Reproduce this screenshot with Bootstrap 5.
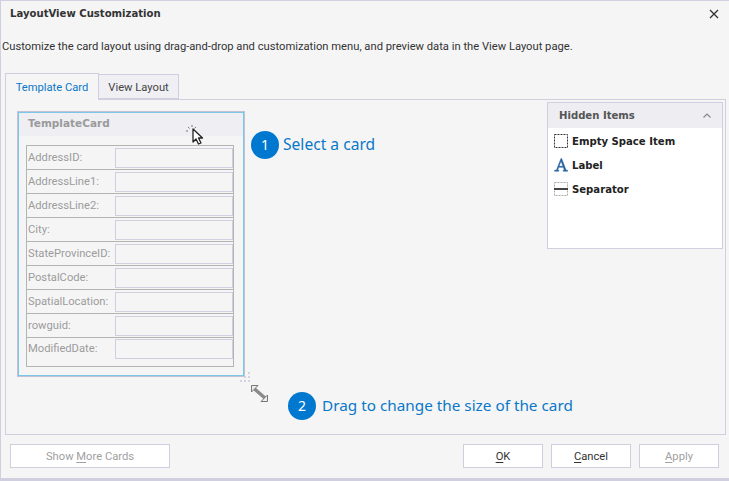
<!DOCTYPE html>
<html lang="en">
<head>
<meta charset="utf-8">
<title>LayoutView Customization</title>
<link href="https://cdn.jsdelivr.net/npm/bootstrap@5.3.0/dist/css/bootstrap.min.css" rel="stylesheet">
<style>
html,body{height:100%;overflow:hidden}
body{background:#f5f5f6;font-family:Roboto,"Noto Sans",sans-serif;font-size:11.2px;color:#333;line-height:1}
.lv-win{height:481px;border:solid #cfcfe0;border-width:1px 0 3px 1px;position:relative}
.lv-title{height:24px;padding:7px 8px 0 9px;font:bold 10.1px "DejaVu Sans",sans-serif;color:#333}
.lv-close{position:absolute;right:10px;top:8px;width:10px;height:10px}
.lv-desc{height:47px;padding:16px 0 0 1px;white-space:nowrap}
.lv-tabs{margin-left:4px;height:27px;border:0;align-items:flex-end}
.lv-tab{height:25px;padding-top:7px;border:1px solid #cfcfe0;background:#f0f0f4;color:#444;text-align:center;margin-left:-1px}
.lv-tab-on{height:27px;width:94px;padding-top:8px;background:#f5f5f6;color:#0a78c8;border-bottom:0;margin-left:0;position:relative;z-index:1;margin-bottom:-1px}
.lv-tab-off{width:81px}
.lv-panel{margin:0 3px 0 4px;height:336px;border:1px solid #cfcfe0;position:relative}
.lv-top{height:292px}
.lv-card{margin:11px 0 0 11px;width:228px;height:266px;border:2px solid #7cc6ea;outline:1px solid #c2c2d2;outline-offset:-1px;flex:none}
.lv-cardhead{height:23px;background:#eeeef3;padding:4px 0 0 9px;font:bold 10.5px "DejaVu Sans",sans-serif;color:#9a9a9a}
.lv-group{margin:9px 9px 0 7px;border:1px solid #b4b4b4;height:222px}
.lv-row{height:24px;border-bottom:1px solid #b4b4b4;padding:1px 0 0 1px;color:#9c9c9c}
.lv-row:last-child{border-bottom:0;height:28px;align-items:flex-start!important}
.lv-row:last-child .lv-lbl{margin-top:4px}
.lv-lbl{width:87px;flex:none;white-space:nowrap}
.lv-input{width:118px;height:20px;border:1px solid #cfcfe0}
.lv-step{color:#0a78c8;font-size:15.3px;white-space:nowrap;font-family:"Noto Sans",sans-serif}
.lv-step1 span{font-size:15.6px}
.lv-num{width:28px;height:28px;background:#0078cf;color:#fff;font-size:14px;border-radius:50%;flex:none}
.lv-step1{margin:31px 0 0 6px}
.lv-step2{margin:0 0 0 282px;height:28px;gap:6px}
.lv-hidden{margin:2px 2px 0 auto;width:176px;height:147px;border:1px solid #cfcfe0;background:#fff;flex:none}
.lv-hhead{height:25px;background:#ededf2;padding:0 11px;font:bold 10.1px "DejaVu Sans",sans-serif;color:#555}
.lv-item{height:24px;padding-left:6px;font:bold 10.1px "DejaVu Sans",sans-serif;color:#222;gap:4px}
.lv-items{padding-top:1px}
.lv-ic{width:14px;height:14px;flex:none}
.lv-foot{padding:9px 10px 0 9px}
.lv-btn{height:24px;width:80px;padding:1px 0 0;border:1px solid #cfcfe0;border-radius:0;background:#fff;color:#333;font-size:11.2px;line-height:1}
.lv-btn:disabled{background:#fff;color:#a0a0a0;border-color:#cfcfe0;opacity:1}
.lv-wide{width:160px}
.lv-cur{position:absolute;pointer-events:none}
u{text-underline-offset:2px}
</style>
</head>
<body>
<div class="lv-win">
  <div class="lv-title">LayoutView Customization</div>
  <svg class="lv-close" viewBox="0 0 10 10"><path d="M1 1 9 9M9 1 1 9" stroke="#333" stroke-width="1.3" fill="none"/></svg>
  <div class="lv-desc">Customize the card layout using drag-and-drop and customization menu, and preview data in the View Layout page.</div>
  <div class="d-flex lv-tabs">
    <div class="lv-tab lv-tab-on">Template Card</div>
    <div class="lv-tab lv-tab-off">View Layout</div>
  </div>
  <div class="lv-panel">
    <div class="d-flex align-items-start lv-top">
      <div class="lv-card">
        <div class="lv-cardhead">TemplateCard</div>
        <div class="lv-group">
          <div class="lv-row d-flex align-items-center"><div class="lv-lbl">AddressID:</div><div class="lv-input"></div></div>
          <div class="lv-row d-flex align-items-center"><div class="lv-lbl">AddressLine1:</div><div class="lv-input"></div></div>
          <div class="lv-row d-flex align-items-center"><div class="lv-lbl">AddressLine2:</div><div class="lv-input"></div></div>
          <div class="lv-row d-flex align-items-center"><div class="lv-lbl">City:</div><div class="lv-input"></div></div>
          <div class="lv-row d-flex align-items-center"><div class="lv-lbl">StateProvinceID:</div><div class="lv-input"></div></div>
          <div class="lv-row d-flex align-items-center"><div class="lv-lbl">PostalCode:</div><div class="lv-input"></div></div>
          <div class="lv-row d-flex align-items-center"><div class="lv-lbl">SpatialLocation:</div><div class="lv-input"></div></div>
          <div class="lv-row d-flex align-items-center"><div class="lv-lbl">rowguid:</div><div class="lv-input"></div></div>
          <div class="lv-row d-flex align-items-center"><div class="lv-lbl">ModifiedDate:</div><div class="lv-input"></div></div>
        </div>
      </div>
      <div class="d-flex align-items-center gap-1 lv-step lv-step1">
        <div class="lv-num d-flex align-items-center justify-content-center">1</div>
        <span>Select a card</span>
      </div>
      <div class="lv-hidden">
        <div class="lv-hhead d-flex align-items-center justify-content-between">
          <span>Hidden Items</span>
          <svg width="8" height="5" viewBox="0 0 8 5"><path d="M.5 4.500 4 1l3.500 3.500" stroke="#888" stroke-width="1.2" fill="none"/></svg>
        </div>
        <div class="lv-items">
          <div class="lv-item d-flex align-items-center">
            <svg class="lv-ic" viewBox="0 0 14 14"><rect x=".5" y=".5" width="13" height="13" fill="none" stroke="#333" stroke-dasharray="2 1"/></svg>
            <span>Empty Space Item</span>
          </div>
          <div class="lv-item d-flex align-items-center">
            <svg class="lv-ic" viewBox="0 0 14 14"><path d="M7 .5 2.400 12.200H.6v1h4.200v-1H3.600l1-2.900h4.800l1 2.900H9.200v1h4.400v-1h-1.500L7.600.5ZM5 8.300 7 3l2 5.300Z" fill="#1f5f9f" fill-rule="evenodd" stroke="#1f5f9f" stroke-width=".5"/></svg>
            <span>Label</span>
          </div>
          <div class="lv-item d-flex align-items-center">
            <svg class="lv-ic" viewBox="0 0 14 14"><rect x=".5" y=".5" width="13" height="13" fill="none" stroke="#aaa" stroke-dasharray="2 1"/><rect y="6" width="14" height="2" fill="#444"/></svg>
            <span>Separator</span>
          </div>
        </div>
      </div>
    </div>
    <div class="d-flex align-items-center lv-step lv-step2">
      <div class="lv-num d-flex align-items-center justify-content-center">2</div>
      <div>Drag to change the size of the card</div>
    </div>
    <svg class="lv-cur" style="left:180px;top:25px" width="22" height="22" viewBox="0 0 22 22">
      <path d="M8 6v13l3-3 2.500 5 2.500-1-2.500-5h4Z" transform="translate(-1 -2)" fill="#fff" stroke="#222" stroke-width="1.300" stroke-linejoin="round"/>
      <path d="M6 0v2M2 2l1.500 1.500M10 2 8.500 3.500M0 6h2" stroke="#777" stroke-width="1" fill="none"/>
    </svg>
    <svg class="lv-cur" style="left:234px;top:272px" width="34" height="34" viewBox="0 0 34 34">
      <g fill="#d4d4e0"><rect x="8" y="0" width="2" height="2"/><rect x="4" y="4" width="2" height="2"/><rect x="8" y="4" width="2" height="2"/><rect y="8" width="2" height="2"/><rect x="4" y="8" width="2" height="2"/><rect x="8" y="8" width="2" height="2"/></g>
      <path d="M14 16.500 25 26" stroke="#8a8a8a" stroke-width="3.500" fill="none"/>
      <path d="M11.500 13.500h6.500l-6.500 6.500ZM27.500 29.500H21l6.500-6.500Z" fill="#eee" stroke="#777"/>
    </svg>
  </div>
  <div class="d-flex lv-foot">
    <button class="btn lv-btn lv-wide" disabled type="button">Show <u>M</u>ore Cards</button>
    <div class="d-flex ms-auto gap-2">
      <button class="btn lv-btn" type="button"><u>O</u>K</button>
      <button class="btn lv-btn" type="button"><u>C</u>ancel</button>
      <button class="btn lv-btn" disabled type="button"><u>A</u>pply</button>
    </div>
  </div>
</div>
<script src="https://cdn.jsdelivr.net/npm/bootstrap@5.3.0/dist/js/bootstrap.bundle.min.js"></script>
</body>
</html>
